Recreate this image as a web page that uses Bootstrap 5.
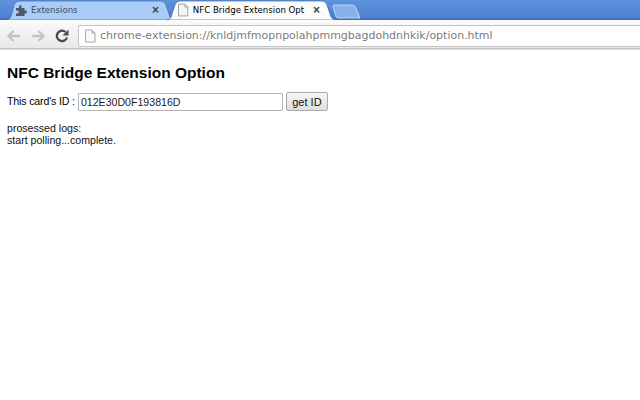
<!DOCTYPE html>
<html lang="en"><head><meta charset="utf-8"><title>NFC Bridge Extension Option</title>
<link href="https://cdn.jsdelivr.net/npm/bootstrap@5.3.0/dist/css/bootstrap.min.css" rel="stylesheet">
<style>
html,body{width:640px;height:400px;overflow:hidden;background:#fff;color:#000}
body{font-family:"Liberation Sans",Arial,sans-serif;font-size:12px}
.tabstrip{height:20px;background:linear-gradient(#5f92dc,#4f80cf 85%,#3f68b0);padding-left:5px}
.tabitem{height:20px;width:162px;margin-right:-1px;line-height:19px;white-space:nowrap}
.tabshape{position:absolute;left:0;top:0}
.tabinner{position:relative;height:20px;padding:0 8px 0 10px}
.tabtitle{width:122px;overflow:hidden;margin-left:4px;font-family:"DejaVu Sans",sans-serif;font-size:8.6px}
.tabgrey{color:#3c4a5e}
.closex{font-size:12px;font-weight:700;color:#444;line-height:18px}
.newtab{margin-top:4px}
.toolbar{height:29px;background:linear-gradient(#fafafa,#e9e9e9);padding:5px 0 2px 5px;border-bottom:1px solid #c4c4c4;box-shadow:0 1px 0 #dedede}
.navicon{width:18px;height:18px;margin-right:6px;flex:none}
.addrbar{width:562px;height:22px;margin-left:1px;background:#fff;border:1px solid #c5c5c5;border-right:0;border-radius:2px 0 0 2px;padding-left:5px;font-family:"DejaVu Sans",sans-serif;font-size:10.98px;color:#7b7b7b;white-space:nowrap}
.addrtext{margin-left:4px;padding-top:2px}
.pagebody{padding:15px 7px 0}
.pagetitle{font-family:"Liberation Sans",Arial,sans-serif;font-size:15.5px;font-weight:700;line-height:17px;margin:0 0 11px;color:#000}
.idrow{height:19px;font-family:"Liberation Sans",Arial,sans-serif;font-size:10.6px;letter-spacing:-.15px;margin-bottom:11px}
.idfield{width:205px;height:18px;margin-left:3px;margin-right:3px;padding:0 2px;border:1px solid #b5b5b5;font:10.6px "Liberation Sans",Arial,sans-serif;color:#222;border-radius:1px}
.idbtn{width:42px;height:19px;padding:0;border:1px solid #aaa;border-radius:2px;background:linear-gradient(#f6f6f6,#dedede);font:11px "Liberation Sans",Arial,sans-serif;color:#111}
.logtext{font-size:10.6px;line-height:12px;color:#111}
</style></head>
<body>
<div class="tabstrip d-flex">
  <div class="tabitem position-relative">
    <svg class="tabshape" width="168" height="20"><path d="M0 20C5 20 6 17 7 13L9 5C10 2 12 1 15 1H155C158 1 160 2 161 5L164 14C165 18 166 20 168 20Z" fill="#a9cdf6" stroke="#3f68b0" stroke-width=".7"/></svg>
    <div class="tabinner d-flex align-items-center tabgrey">
      <svg width="12" height="12" viewBox="0 0 12 12"><path d="M1 4h3V2.500a1.300 1.300 0 0 1 2.600 0V4h3v2.500h1a1.500 1.500 0 0 1 0 3h-1V12H1V9.500h1.300a1.500 1.500 0 0 0 0-3H1Z" fill="#4d5a6c"/></svg>
      <span class="tabtitle">Extensions</span>
      <span class="closex">×</span>
    </div>
  </div>
  <div class="tabitem position-relative">
    <svg class="tabshape" width="172" height="20"><path d="M0 20C4 20 5 18 6 14L9 5C10 2 12 1 15 1H155C158 1 160 2 161 5L164 14C165 18 167 20 172 20Z" fill="#fbfbfb" stroke="#3f68b0" stroke-width=".7"/></svg>
    <div class="tabinner d-flex align-items-center text-black">
      <svg width="12" height="14" viewBox="0 0 12 14" style="margin-left:1px"><path d="M1.500 1H8l3 3v9H1.500Z" fill="#f4f4f4" stroke="#a5a5a5"/><path d="M8 1v3h3" fill="none" stroke="#a5a5a5"/></svg>
      <span class="tabtitle">NFC Bridge Extension Opt</span>
      <span class="closex">×</span>
    </div>
  </div>
  <svg class="newtab" width="30" height="15" style="margin-left:5px"><path d="M2 1H20C22 1 23 2 24 4L28 14H6C5 14 4 13 4 12L1 3C1 2 1 1 2 1Z" fill="#88b0ea" stroke="#d4e3f7" stroke-width=".8"/></svg>
</div>
<div class="toolbar d-flex align-items-center">
  <svg class="navicon" viewBox="0 0 18 18"><path d="M15 9H4M8.500 4 3.500 9l5 5" fill="none" stroke="#c3c3c3" stroke-width="2.400"/></svg>
  <svg class="navicon" viewBox="0 0 18 18"><path d="M3 9h11M9.500 4l5 5-5 5" fill="none" stroke="#c3c3c3" stroke-width="2.400"/></svg>
  <svg class="navicon" viewBox="0 0 18 18"><path d="M14 10.500A5.200 5.200 0 1 1 12.500 5" fill="none" stroke="#4a4a4a" stroke-width="2.300"/><path d="M15.500 2.500v6h-6Z" fill="#4a4a4a"/></svg>
  <div class="addrbar d-flex align-items-center">
    <svg width="12" height="14" viewBox="0 0 12 14"><path d="M1.500 1H8l3 3v9H1.500Z" fill="#fafafa" stroke="#a5a5a5"/><path d="M8 1v3h3" fill="none" stroke="#a5a5a5"/></svg>
    <span class="addrtext">chrome-extension://knldjmfmopnpolahpmmgbagdohdnhkik/option.html</span>
  </div>
</div>
<main class="pagebody">
  <h1 class="pagetitle">NFC Bridge Extension Option</h1>
  <div class="idrow d-flex align-items-center">
    <span>This card's ID :</span>
    <input class="idfield" type="text" value="012E30D0F193816D" aria-label="card ID">
    <button class="idbtn" type="button">get ID</button>
  </div>
  <div class="logtext">prosessed logs:<br>start polling...complete.</div>
</main>
</body></html>
